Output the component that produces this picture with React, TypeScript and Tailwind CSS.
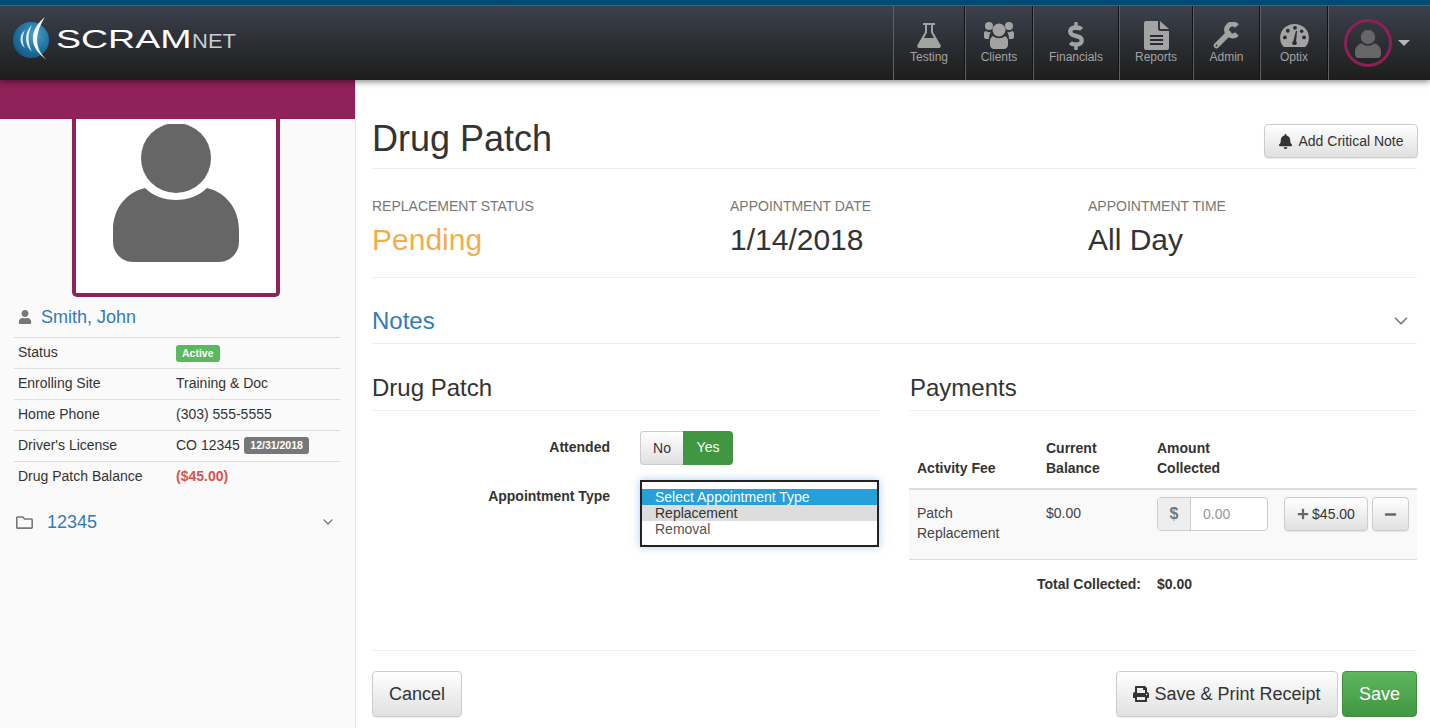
import { ChevronDown } from "lucide-react";
import { FaBell, FaDollarSign, FaMinus, FaPlus, FaPrint, FaRegFolder, FaUser } from "react-icons/fa";

const FlaskIcon = () => (
  <svg width="24" height="25" viewBox="0 0 24 25" fill="currentColor">
    <path
      fillRule="evenodd"
      d="M6 0H18V2H16V9L23.500 22C24.500 24 23 25 21.500 25H2.500C1 25 -.5 24 .5 22L8 9V2H6ZM10 2V9.500L7 15H17L14 9.500V2Z"
    />
  </svg>
);

const ClientsIcon = () => (
  <svg width="30" height="27" viewBox="0 0 30 27" fill="currentColor">
    <circle cx="5" cy="4" r="4" />
    <circle cx="25" cy="4" r="4" />
    <path d="M0 11c0-1 1-2 2-2 1 1 3 1.500 5 1-1.500 2-2 4-2 7H2c-1 0-2-1-2-2zM30 11c0-1-1-2-2-2-1 1-3 1.500-5 1 1.500 2 2 4 2 7h3c1 0 2-1 2-2z" />
    <circle cx="15" cy="8" r="6.500" />
    <path d="M6 19c0-2 1-4 3-5 3 3 9 3 12 0 2 1 3 3 3 5v4c0 2-2 4-4 4H10c-2 0-4-2-4-4z" />
  </svg>
);

const ReportsIcon = () => (
  <svg width="25" height="29" viewBox="0 0 25 29" fill="currentColor">
    <path d="M0 2a2 2 0 0 1 2-2h12v8a2 2 0 0 0 2 2h9v17a2 2 0 0 1-2 2H2a2 2 0 0 1-2-2z" />
    <path d="M16 0l9 8h-9z" />
    <g fill="#2a2c31">
      <rect x="6" y="14" width="13" height="2" />
      <rect x="6" y="18" width="13" height="2" />
      <rect x="6" y="22" width="13" height="2" />
    </g>
  </svg>
);

const WrenchIcon = () => (
  <svg width="27" height="27" viewBox="0 0 27 27" fill="none" stroke="currentColor">
    <path d="M3.500 23.500L15.500 11.500" strokeWidth="5.500" strokeLinecap="round" />
    <path d="M24 4A6 6 0 1 0 24 12" strokeWidth="5" />
    <circle cx="3.500" cy="23.500" r="1" fill="#2a2c31" stroke="none" />
  </svg>
);

const GaugeIcon = () => (
  <svg width="29" height="23" viewBox="0 0 30 24">
    <path d="M15 0C7 0 0 6 0 14c0 4 1 7 4 10h22c3-3 4-6 4-10 0-8-7-14-15-14z" fill="currentColor" />
    <g fill="#2a2c31">
      <circle cx="5" cy="14" r="2" />
      <circle cx="8" cy="7" r="2" />
      <circle cx="15.500" cy="4" r="2" />
      <circle cx="25" cy="14" r="2" />
      <circle cx="22.500" cy="7.500" r="1.800" />
      <path d="M16.500 7l1.200.300-1 10.700c1.300 1.300 1 3.500-1 4h-1.500c-2-.500-2.300-3-.500-4z" />
    </g>
  </svg>
);

const Person = ({ className }: { className?: string }) => (
  <svg className={className} viewBox="0 0 126 138" fill="#666">
    <path d="M32 64C14 68 0 84 0 106v12c0 11 9 20 20 20h86c11 0 20-9 20-20v-12c0-22-14-38-32-42-8 8-19 12-31 12s-23-4-31-12z" />
    <circle cx="63" cy="34" r="35" />
  </svg>
);

const Logo = () => (
  <div className="-mt-[8px] flex items-center">
    <svg width="38" height="46" viewBox="0 0 38 46" className="mr-[5px]">
      <defs>
        <radialGradient id="sphere" cx="0.6" cy="0.35" r="0.8">
          <stop offset="0" stopColor="#4f9fc4" />
          <stop offset="0.6" stopColor="#1b6d9c" />
          <stop offset="1" stopColor="#0f4f7c" />
        </radialGradient>
      </defs>
      <circle cx="18" cy="24" r="18" fill="url(#sphere)" />
      <path d="M32 1C18 12 13 30 34 44 24 35 19 22 32 1z" fill="#f4f8fa" />
      <path d="M19 9C11 16 11 29 19 36 15 28 14 18 19 9z" fill="#e3eff5" />
      <path d="M12 14C6 19 6 28 12 32 9 27 9 20 12 14z" fill="#d5e6f0" />
    </svg>
    <div className="flex h-8 items-baseline text-white">
      <span className="inline-block w-[136px] origin-left scale-x-[1.5] text-[25px] leading-8">SCRAM</span>
      <span className="inline-block w-[44px] origin-left scale-x-[1.1] text-[20px] leading-8 text-[#c9ced2]">NET</span>
    </div>
  </div>
);

const navItems = [
  { label: "Testing", width: "w-[72px]", icon: <FlaskIcon /> },
  { label: "Clients", width: "w-[68px]", icon: <ClientsIcon /> },
  { label: "Financials", width: "w-[86px]", icon: <FaDollarSign size={28} /> },
  { label: "Reports", width: "w-[74px]", icon: <ReportsIcon /> },
  { label: "Admin", width: "w-[67px]", icon: <WrenchIcon /> },
  { label: "Optix", width: "w-[68px]", icon: <GaugeIcon /> },
];

const infoRows = [
  { label: "Enrolling Site", value: "Training & Doc" },
  { label: "Home Phone", value: "(303) 555-5555" },
];

const TopBar = () => (
  <header className="relative z-10 shrink-0 shadow-[0_2px_6px_rgba(0,0,0,0.45)]">
    <div className="h-[5px] bg-[#004a73]" />
    <div className="h-px bg-[#1a6f9f]" />
    <div className="flex h-[74px] items-center bg-gradient-to-b from-[#3b414c] to-[#1d1d1d] pl-[13px]">
      <Logo />
      <nav className="ml-auto flex h-full">
        {navItems.map((item) => (
          <a
            key={item.label}
            className={`flex flex-col items-center border-l border-l-[#5f6165] border-r border-r-[#111] pt-[16px] text-[12px] leading-4 text-[#a3a3a3] ${item.width}`}
          >
            <span className="flex h-[27px] items-center">{item.icon}</span>
            <span>{item.label}</span>
          </a>
        ))}
        <div className="flex w-[102px] items-center border-l border-l-[#5f6165] pl-[15px]">
          <div className="flex size-[48px] items-end justify-center overflow-hidden rounded-full border-[3px] border-[#8f1f57] pb-[6px]">
            <Person className="w-[26px]" />
          </div>
          <span className="ml-[6px] size-0 border-x-[6px] border-t-[6px] border-x-transparent border-t-[#b5b5b5]" />
        </div>
      </nav>
    </div>
  </header>
);

const Sidebar = () => (
  <aside className="w-[356px] shrink-0 border-r border-[#e7e7e7] bg-[#fafafa]">
    <div className="h-[39px] bg-[#912159]" />
    <div className="ml-[72px] flex h-[178px] w-[208px] items-start justify-center rounded-b-[5px] border-x-[4px] border-b-[4px] border-[#912159] bg-white pt-[5px]">
      <Person className="w-[126px]" />
    </div>
    <div className="flex items-center pl-[18px] pt-[9px]">
      <FaUser size={14} className="text-[#777]" />
      <span className="ml-[9px] text-[18px] leading-[22px] text-[#337ab7]">Smith, John</span>
    </div>
    <div className="ml-[14px] mt-[9px] w-[326px] text-[14px] leading-5">
      <div className="flex h-[31px] border-t border-[#ddd] pl-[4px] pt-[4px]">
        <span className="w-[158px]">Status</span>
        <span className="mt-[3px] h-[17px] rounded-[3px] bg-[#5cb85c] px-[6px] text-[10.500px] font-bold leading-[17px] text-white">Active</span>
      </div>
      {infoRows.map((row) => (
        <div key={row.label} className="flex h-[31px] border-t border-[#ddd] pl-[4px] pt-[4px]">
          <span className="w-[158px]">{row.label}</span>
          <span>{row.value}</span>
        </div>
      ))}
      <div className="flex h-[31px] border-t border-[#ddd] pl-[4px] pt-[4px]">
        <span className="w-[158px]">Driver's License</span>
        <span>CO 12345</span>
        <span className="ml-[4px] mt-[2px] h-[17px] rounded-[3px] bg-[#777] px-[6.500px] text-[10.500px] font-bold leading-[17px] text-white">12/31/2018</span>
      </div>
      <div className="flex h-[31px] border-t border-[#ddd] pl-[4px] pt-[4px]">
        <span className="w-[158px]">Drug Patch Balance</span>
        <span className="font-bold text-[#d9534f]">($45.00)</span>
      </div>
    </div>
    <div className="flex items-center pl-[16px] pr-[19px] pt-[18px]">
      <FaRegFolder size={17} className="text-[#777]" />
      <span className="ml-[14px] text-[18px] leading-6 text-[#337ab7]">12345</span>
      <ChevronDown size={16} strokeWidth={2} className="ml-auto text-[#777]" />
    </div>
  </aside>
);

const btn = "rounded-[4px] border border-[#ccc] bg-gradient-to-b from-white to-[#e0e0e0] text-[#333] shadow-[0_1px_1px_rgba(0,0,0,0.08)]";

const Stat = ({ label, value, color }: { label: string; value: string; color?: string }) => (
  <div>
    <div className="text-[14px] uppercase leading-5 text-[#777]">{label}</div>
    <div className={`mt-[6px] text-[30px] leading-9 ${color ?? "text-[#333]"}`}>{value}</div>
  </div>
);

const DrugPatchForm = () => (
  <section className="w-[508px]">
    <h2 className="border-b border-[#eee] pb-[9px] text-[24px] leading-[26px]">Drug Patch</h2>
    <div className="mt-[20px] flex">
      <label className="w-[238px] pt-[6px] text-right text-[14px] font-bold leading-5">Attended</label>
      <div className="ml-[30px] flex h-[34px] text-[14px] leading-[32px]">
        <span className="w-[43px] rounded-l-[4px] border border-r-0 border-[#ccc] bg-gradient-to-b from-white to-[#e0e0e0] text-center">No</span>
        <span className="w-[50px] rounded-r-[4px] bg-[#419641] text-center text-white">Yes</span>
      </div>
    </div>
    <div className="mt-[15px] flex">
      <label className="w-[238px] pt-[6px] text-right text-[14px] font-bold leading-5">Appointment Type</label>
      <div className="ml-[30px] h-[67px] w-[239px] border-2 border-[#222] bg-white py-[7px] text-[14px] leading-4 shadow-[0_0_8px_rgba(102,175,233,0.6)]">
        <div className="bg-[#25a0da] pl-[13px] text-white">Select Appointment Type</div>
        <div className="bg-[#ddd] pl-[13px]">Replacement</div>
        <div className="pl-[13px] text-[#555]">Removal</div>
      </div>
    </div>
  </section>
);

const Payments = () => (
  <section className="ml-[30px] w-[507px]">
    <h2 className="border-b border-[#eee] pb-[9px] text-[24px] leading-[26px]">Payments</h2>
    <table className="-ml-px w-[508px] table-fixed text-[14px] leading-5">
      <thead>
        <tr className="border-b-2 border-[#ddd] text-left align-bottom">
          <th className="w-[129px] px-2 pb-[10px] pt-[27px] font-bold">Activity Fee</th>
          <th className="w-[111px] px-2 pb-[10px] pt-[27px] font-bold">Current<br />Balance</th>
          <th className="w-[127px] px-2 pb-[10px] pt-[27px] font-bold">Amount<br />Collected</th>
          <th />
        </tr>
      </thead>
      <tbody>
        <tr className="h-[70px] border-b border-[#ddd] bg-[#f9f9f9] align-top">
          <td className="px-2 pt-[13px] text-[#444]">Patch<br />Replacement</td>
          <td className="px-2 pt-[13px] text-[#444]">$0.00</td>
          <td className="pt-[7px] pl-2" colSpan={2}>
            <div className="flex">
              <div className="flex h-[34px] w-[111px] rounded-[4px] border border-[#ccc] bg-white">
                <span className="flex w-[33px] items-center justify-center rounded-l-[3px] border-r border-[#ccc] bg-[#eee] text-[16px] font-bold text-[#777]">$</span>
                <span className="pl-[12px] leading-[32px] text-[#999]">0.00</span>
              </div>
              <button className={`ml-[16px] flex h-[34px] w-[84px] items-center justify-center gap-[3px] ${btn}`}>
                <FaPlus size={12} className="text-[#666]" />
                $45.00
              </button>
              <button className={`ml-[4px] flex h-[34px] w-[37px] items-center justify-center ${btn}`}>
                <FaMinus size={13} className="text-[#666]" />
              </button>
            </div>
          </td>
        </tr>
        <tr className="font-bold">
          <td colSpan={2} className="px-2 pt-[14px] text-right">Total Collected:</td>
          <td className="px-2 pt-[14px]">$0.00</td>
          <td />
        </tr>
      </tbody>
    </table>
  </section>
);

export default function App() {
  return (
    <div className="flex h-[728px] flex-col overflow-hidden bg-white font-['Liberation_Sans',Arial,sans-serif] text-[#333]">
      <TopBar />
      <div className="flex min-h-0 flex-1">
        <Sidebar />
        <main className="flex-1 pl-4 pr-[13px]">
          <div className="flex items-start justify-between border-b border-[#eee] pb-[9px] pt-[39px]">
            <h1 className="text-[36px] leading-10">Drug Patch</h1>
            <button className={`-mr-px mt-[5px] flex h-[34px] w-[154px] items-center justify-center gap-[5px] text-[14px] ${btn}`}>
              <FaBell size={15} />
              Add Critical Note
            </button>
          </div>
          <div className="grid grid-cols-[358px_358px_1fr] border-b border-[#eee] pb-[19px] pt-[27px]">
            <Stat label="Replacement Status" value="Pending" color="text-[#f0ad4e]" />
            <Stat label="Appointment Date" value="1/14/2018" />
            <Stat label="Appointment Time" value="All Day" />
          </div>
          <div className="flex items-center justify-between border-b border-[#eee] pb-[6px] pr-[5px] pt-[27px]">
            <span className="text-[24px] leading-8 text-[#337ab7]">Notes</span>
            <ChevronDown size={22} strokeWidth={1.8} className="text-[#777]" />
          </div>
          <div className="flex h-[307px] border-b border-[#eee] pt-[31px]">
            <DrugPatchForm />
            <Payments />
          </div>
          <div className="flex justify-between pt-[20px] text-[18px]">
            <button className={`h-[46px] w-[90px] ${btn}`}>Cancel</button>
            <div className="flex gap-[4px]">
              <button className={`flex h-[46px] w-[222px] items-center justify-center gap-[5px] ${btn}`}>
                <FaPrint size={16} />
                Save &amp; Print Receipt
              </button>
              <button className="h-[46px] w-[75px] rounded-[4px] border border-[#3e8f3e] bg-gradient-to-b from-[#5cb85c] to-[#419641] text-white">Save</button>
            </div>
          </div>
        </main>
      </div>
    </div>
  );
}
